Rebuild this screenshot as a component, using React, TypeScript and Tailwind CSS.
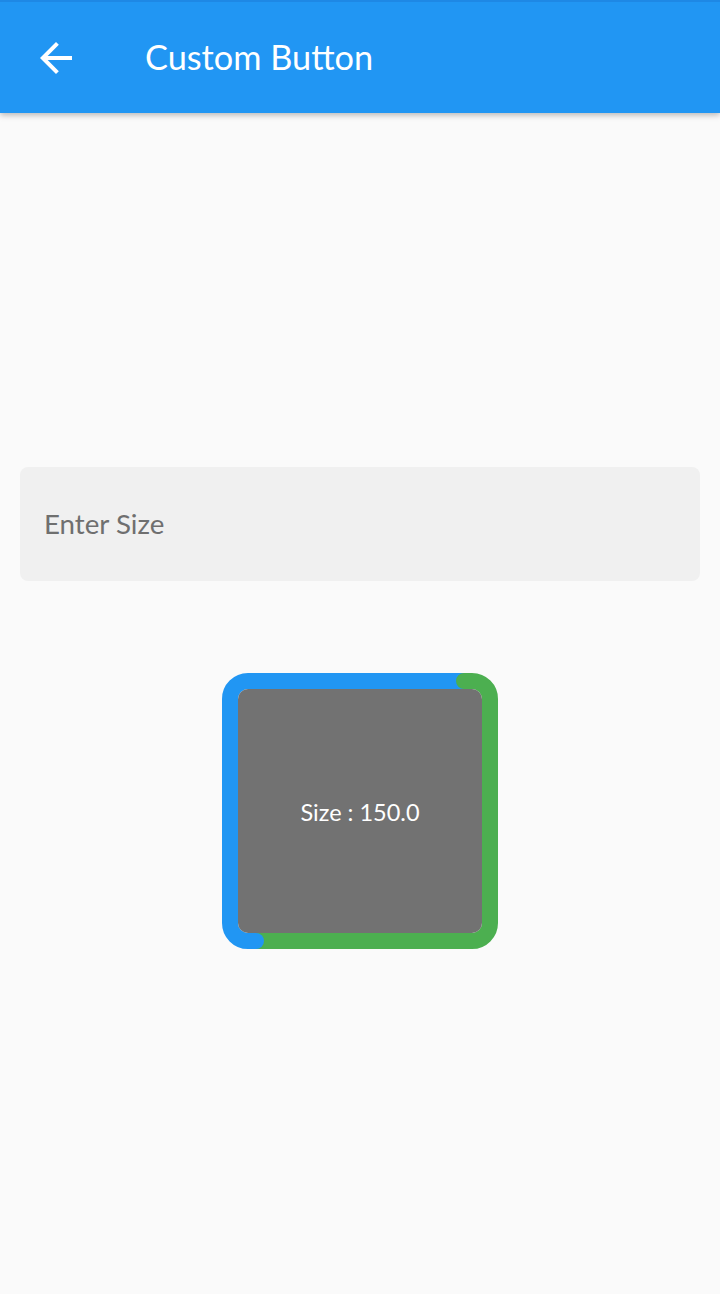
import React from "react";

export default function App() {
  return (
    <div className="w-[720px] h-[1294px] bg-[#fafafa] flex flex-col" style={{ fontFamily: "Lato, 'Noto Sans', sans-serif" }}>
      <div className="relative z-10 h-[113px] bg-[#2196f3] border-t-2 border-[#1e88e5] shadow-[0_2px_6px_rgba(0,0,0,0.28)] flex items-center shrink-0">
        <div className="w-[48px] h-[48px] ml-[32px] flex items-center justify-center">
          <svg width="48" height="48" viewBox="0 0 24 24" fill="#ffffff">
            <path d="M20 11H7.83l5.59-5.59L12 4l-8 8 8 8 1.41-1.41L7.83 13H20v-2z" />
          </svg>
        </div>
        <div className="ml-[65px] text-white text-[34.3px] font-normal leading-none">Custom Button</div>
      </div>
      <div className="flex flex-col items-center pt-[354px]">
        <div className="w-[680px] h-[114px] bg-[#f0f0f0] rounded-[8px] flex items-center px-[24px]">
          <span className="text-[#6f6f6f] text-[27.7px] leading-none">Enter Size</span>
        </div>
        <div className="mt-[92px] relative w-[276px] h-[276px]">
          <svg className="absolute inset-0" width="276" height="276" viewBox="0 0 276 276">
            <path
              d="M34 268 H26 A18 18 0 0 1 8 250 V26 A18 18 0 0 1 26 8 H242"
              fill="none"
              stroke="#2196f3"
              strokeWidth="16"
              strokeLinecap="round"
            />
            <path
              d="M242 8 H250 A18 18 0 0 1 268 26 V250 A18 18 0 0 1 250 268 H34"
              fill="none"
              stroke="#4caf50"
              strokeWidth="16"
              strokeLinecap="round"
            />
            <path d="M30 268 H34" fill="none" stroke="#2196f3" strokeWidth="16" strokeLinecap="round" />
          </svg>
          <div className="absolute left-[16px] top-[16px] w-[244px] h-[244px] bg-[#727272] rounded-[10px] flex items-center justify-center">
            <span className="text-white text-[23.5px] leading-none pt-[4px]">Size : 150.0</span>
          </div>
        </div>
      </div>
    </div>
  );
}
